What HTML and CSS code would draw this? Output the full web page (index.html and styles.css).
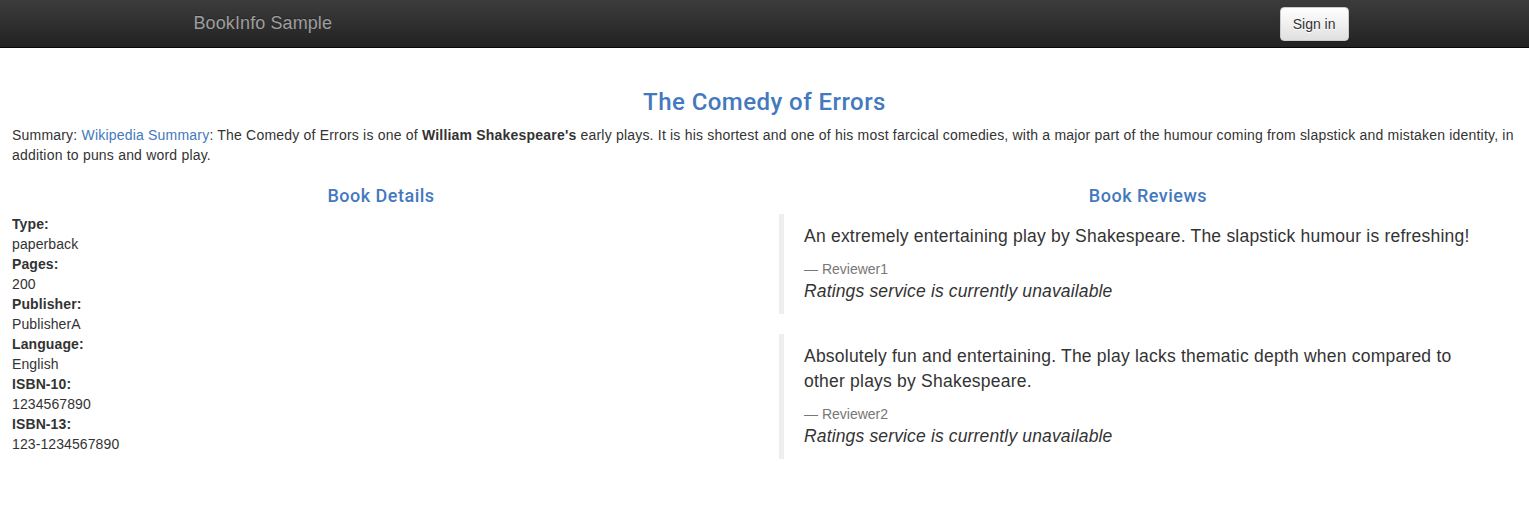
FILE: index.html
```html
<!DOCTYPE html>
<html lang="en">
<head>
<meta charset="utf-8">
<title>Simple Bookstore App</title>
<link rel="stylesheet" href="styles.css">
</head>
<body>
<nav class="navbar">
  <div class="navbar-inner">
    <a class="brand" href="#">BookInfo Sample</a>
    <button type="button" class="btn-signin">Sign in</button>
  </div>
</nav>

<main class="page">
  <h3 class="title">The Comedy of Errors</h3>
  <p class="summary">Summary: <a href="#">Wikipedia Summary</a>: The Comedy of Errors is one of <b>William Shakespeare's</b> early plays. It is his shortest and one of his most farcical comedies, with a major part of the humour coming from slapstick and mistaken identity, in addition to puns and word play.</p>

  <div class="columns">
    <section class="col">
      <h4 class="col-title">Book Details</h4>
      <dl class="details">
        <dt>Type:</dt><dd>paperback</dd>
        <dt>Pages:</dt><dd>200</dd>
        <dt>Publisher:</dt><dd>PublisherA</dd>
        <dt>Language:</dt><dd>English</dd>
        <dt>ISBN-10:</dt><dd>1234567890</dd>
        <dt>ISBN-13:</dt><dd>123-1234567890</dd>
      </dl>
    </section>
    <section class="col">
      <h4 class="col-title">Book Reviews</h4>
      <blockquote class="review">
        <p>An extremely entertaining play by Shakespeare. The slapstick humour is refreshing!</p>
        <small>Reviewer1</small>
        <p class="rating"><i>Ratings service is currently unavailable</i></p>
      </blockquote>
      <blockquote class="review">
        <p>Absolutely fun and entertaining. The play lacks thematic depth when compared to other plays by Shakespeare.</p>
        <small>Reviewer2</small>
        <p class="rating"><i>Ratings service is currently unavailable</i></p>
      </blockquote>
    </section>
  </div>
</main>
</body>
</html>
```

FILE: styles.css
```css
* { box-sizing: border-box; }

html, body {
  margin: 0;
  padding: 0;
}

body {
  font-family: "Liberation Sans", Arial, Helvetica, sans-serif;
  font-size: 14px;
  line-height: 20px;
  color: #333;
  background: #fff;
}

a { color: #4479bd; text-decoration: none; }

.navbar {
  height: 48px;
  background: linear-gradient(to bottom, #3c3c3c 0%, #222 100%);
  border-bottom: 1px solid #080808;
}

.navbar-inner {
  width: 1170px;
  height: 47px;
  margin: 0 auto;
  padding: 0 1px 0 14px;
  display: flex;
  align-items: center;
  justify-content: space-between;
}

.brand {
  color: #9d9d9d;
  font-size: 18px;
  line-height: 20px;
  letter-spacing: 0.1px;
  text-shadow: 0 -1px 0 rgba(0,0,0,.25);
  margin-top: -2px;
}

.btn-signin {
  font-family: inherit;
  font-size: 14px;
  line-height: 20px;
  color: #333;
  padding: 6px 12px;
  height: 34px;
  border: 1px solid #ccc;
  border-radius: 4px;
  background: linear-gradient(to bottom, #fff 0%, #e0e0e0 100%);
  text-shadow: 0 1px 0 #fff;
  box-shadow: inset 0 1px 0 rgba(255,255,255,.15), 0 1px 1px rgba(0,0,0,.075);
}

.page {
  padding: 0 12px;
}

.title {
  margin: 41px 0 10px;
  font-family: Roboto, "Liberation Sans", Arial, sans-serif;
  font-size: 24px;
  font-weight: 500;
  line-height: 26.4px;
  letter-spacing: 0.45px;
  text-align: center;
  color: #4479bd;
}

.summary {
  margin: 0 0 10px;
  letter-spacing: 0.2px;
}

.columns {
  display: grid;
  grid-template-columns: 1fr 1fr;
  column-gap: 29px;
}

.col-title {
  margin: 11px 0 8px;
  font-family: Roboto, "Liberation Sans", Arial, sans-serif;
  font-size: 18px;
  font-weight: 500;
  line-height: 19.8px;
  letter-spacing: 0.5px;
  text-align: center;
  color: #4479bd;
}

.details {
  margin: 0;
  letter-spacing: 0.1px;
}

.details dt {
  font-weight: bold;
}

.details dd {
  margin: 0;
}

.review {
  margin: 0 0 20px;
  padding: 10px 20px;
  border-left: 5px solid #eee;
  font-size: 17.5px;
  line-height: 25px;
}

.review p {
  margin: 0 0 10px;
  letter-spacing: 0.22px;
}

.review p.rating {
  letter-spacing: 0.15px;
}

.review p:last-child {
  margin-bottom: 0;
}

.review small {
  display: block;
  font-size: 14px;
  line-height: 20px;
  color: #777;
}

.review small::before {
  content: "\2014 \00A0";
}
```
